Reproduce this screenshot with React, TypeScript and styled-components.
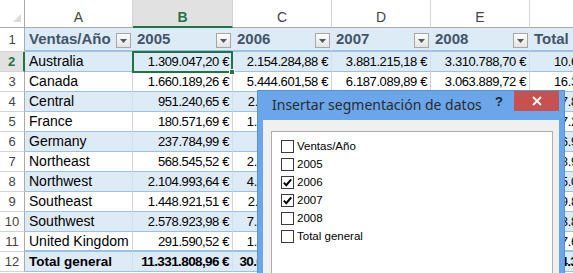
import styled, { createGlobalStyle } from 'styled-components';

const GlobalStyle = createGlobalStyle`
  html, body {
    margin: 0;
    padding: 0;
    background: #fff;
    overflow: hidden;
  }
`;

const Screen = styled.div`
  position: relative;
  width: 573px;
  height: 273px;
  overflow: hidden;
  background: #fff;
  font-family: "Liberation Sans", Arial, sans-serif;
`;

const Grid = styled.div`
  display: grid;
  grid-template-columns: 25px 108px 100px 99px 99px 99px 116px;
  grid-template-rows: 28px 24px repeat(11, 20px);
  width: 646px;
`;

const Corner = styled.div`
  box-sizing: border-box;
  display: flex;
  align-items: flex-end;
  justify-content: flex-end;
  padding: 0 3px 5px 0;
  border-right: 1px solid #ababab;
  border-bottom: 1px solid #ababab;
`;

const ColHead = styled.div<{ $active?: boolean }>`
  box-sizing: border-box;
  padding-top: 7px;
  text-align: center;
  font-size: 14px;
  line-height: 20px;
  color: ${p => (p.$active ? '#217346' : '#444')};
  font-weight: ${p => (p.$active ? 700 : 400)};
  background: ${p => (p.$active ? '#e1e1e1' : '#fff')};
  border-right: 1px solid #d4d4d4;
  border-bottom: ${p => (p.$active ? '2px solid #217346' : '1px solid #ababab')};
`;

const RowHead = styled.div<{ $active?: boolean }>`
  box-sizing: border-box;
  display: flex;
  align-items: center;
  justify-content: center;
  font-size: 13px;
  color: ${p => (p.$active ? '#217346' : '#444')};
  font-weight: ${p => (p.$active ? 700 : 400)};
  background: ${p => (p.$active ? '#e1e1e1' : '#fff')};
  border-right: ${p => (p.$active ? '2px solid #217346' : '1px solid #ababab')};
  border-bottom: 1px solid #d4d4d4;
`;

const HeadCell = styled.div`
  box-sizing: border-box;
  display: flex;
  align-items: center;
  justify-content: space-between;
  padding: 0 1px 0 4px;
  background: #ddebf7;
  border-right: 1px solid #ddebf7;
  border-bottom: 2px solid #9bc2e6;
  font-size: 15px;
  font-weight: 700;
  line-height: 22px;
  color: #44546a;
  white-space: nowrap;
`;

const Drop = styled.span`
  align-self: flex-end;
  margin-bottom: 2px;
  width: 15px;
  height: 15px;
  box-sizing: border-box;
  border: 1px solid #a6a6a6;
  background: linear-gradient(#fdfdfd, #e4e4e4);
  display: flex;
  align-items: center;
  justify-content: center;
  flex-shrink: 0;
`;

const Accent = styled.span`
  color: #e8912d;
  margin-left: 5px;
`;

const Cell = styled.div<{ $fill: boolean; $num?: boolean; $bold?: boolean; $thick?: boolean }>`
  position: relative;
  box-sizing: border-box;
  padding: 0 ${p => (p.$num ? '3px' : '4px')};
  background: ${p => (p.$fill ? '#ddebf7' : '#fff')};
  border-right: 1px solid ${p => (p.$fill ? '#cfe0f1' : '#d4d4d4')};
  border-bottom: ${p => (p.$thick ? 2 : 1)}px solid #9bc2e6;
  text-align: ${p => (p.$num ? 'right' : 'left')};
  font-size: ${p => (p.$bold ? '13.5px' : p.$num ? '13px' : '14px')};
  letter-spacing: ${p => (p.$num ? (p.$bold ? '-0.6px' : '-0.4px') : '0')};
  font-weight: ${p => (p.$bold ? 700 : 400)};
  line-height: 19px;
  white-space: nowrap;
  color: #000;
`;

const Selection = styled.div`
  position: absolute;
  left: -1px;
  top: -1px;
  width: 101px;
  height: 22px;
  box-sizing: border-box;
  border: 2px solid #217346;
  z-index: 2;
  pointer-events: none;
`;

const Handle = styled.span`
  position: absolute;
  right: -4px;
  bottom: -4px;
  width: 6px;
  height: 6px;
  box-sizing: border-box;
  background: #217346;
  border: 1px solid #fff;
`;

const Dialog = styled.div`
  position: absolute;
  left: 257px;
  top: 90px;
  width: 308px;
  height: 200px;
  box-sizing: border-box;
  border: 1px solid #5592dc;
  background: #6ba6eb;
  display: flex;
  flex-direction: column;
  padding: 0 5px;
  z-index: 5;
`;

const TitleBar = styled.div`
  height: 29px;
  display: flex;
  align-items: flex-start;
  flex-shrink: 0;
`;

const Title = styled.span`
  margin-right: auto;
  padding-left: 9px;
  font-family: "Noto Sans", "Open Sans", sans-serif;
  font-size: 14px;
  line-height: 27px;
  color: #2b2b2b;
  white-space: nowrap;
`;

const Help = styled.span`
  margin-right: 11px;
  font-family: "Liberation Sans", Arial, sans-serif;
  font-size: 13px;
  font-weight: 700;
  line-height: 22px;
  color: #1f1f1f;
`;

const Close = styled.span`
  width: 45px;
  height: 20px;
  background: #c75050;
  display: flex;
  align-items: center;
  justify-content: center;
`;

const Body = styled.div`
  flex: 1;
  background: #f0f0f0;
  padding: 11px 6px 0 8px;
  display: flex;
`;

const ListBox = styled.div`
  flex: 1;
  background: #fff;
  border: 1px solid #abadb3;
  padding: 5px 0 0 9px;
  display: flex;
  flex-direction: column;
`;

const Item = styled.div`
  height: 18px;
  display: flex;
  align-items: center;
  font-family: "Liberation Sans", Arial, sans-serif;
  font-size: 11.5px;
  color: #000;
`;

const Box = styled.span`
  width: 13px;
  height: 13px;
  margin-right: 3px;
  box-sizing: border-box;
  border: 1px solid #3a3a3a;
  background: #fff;
  display: flex;
  align-items: center;
  justify-content: center;
  flex-shrink: 0;
`;

const rows = [
  { name: 'Australia', v: ['1.309.047,20 €', '2.154.284,88 €', '3.881.215,18 €', '3.310.788,70 €', '10.655.335,96 €'] },
  { name: 'Canada', v: ['1.660.189,26 €', '5.444.601,58 €', '6.187.089,89 €', '3.063.889,72 €', '16.355.770,45 €'] },
  { name: 'Central', v: ['951.240,65 €', '2.011.452,37 €', '2.476.918,04 €', '2.455.312,83 €', '7.894.923,89 €'] },
  { name: 'France', v: ['180.571,69 €', '1.325.894,12 €', '3.105.227,61 €', '2.624.511,07 €', '7.236.204,49 €'] },
  { name: 'Germany', v: ['237.784,99 €', '512.336,40 €', '2.988.104,55 €', '3.163.740,98 €', '6.901.966,92 €'] },
  { name: 'Northeast', v: ['568.545,52 €', '2.437.901,85 €', '3.275.646,30 €', '2.667.825,19 €', '8.949.918,86 €'] },
  { name: 'Northwest', v: ['2.104.993,64 €', '4.318.572,06 €', '5.402.216,77 €', '3.220.037,48 €', '15.045.819,95 €'] },
  { name: 'Southeast', v: ['1.448.921,51 €', '2.846.118,73 €', '2.791.564,12 €', '2.731.303,80 €', '9.817.908,16 €'] },
  { name: 'Southwest', v: ['2.578.923,98 €', '7.557.390,29 €', '8.613.012,45 €', '5.052.374,91 €', '23.801.701,63 €'] },
  { name: 'United Kingdom', v: ['291.590,52 €', '1.408.225,47 €', '3.317.472,61 €', '2.661.398,22 €', '7.678.686,82 €'] },
];

const total = ['11.331.808,96 €', '30.016.777,75 €', '42.038.468,43 €', '30.951.191,00 €', '114.338.236,14 €'];

const years = ['2005', '2006', '2007', '2008'];
const fields = [
  { label: 'Ventas/Año', checked: false },
  { label: '2005', checked: false },
  { label: '2006', checked: true },
  { label: '2007', checked: true },
  { label: '2008', checked: false },
  { label: 'Total general', checked: false },
];

function Arrow() {
  return (
    <svg width="7" height="4" viewBox="0 0 7 4">
      <path d="M0 0 H7 L3.5 4 Z" fill="#575757" />
    </svg>
  );
}

function Check() {
  return (
    <svg width="11" height="11" viewBox="0 0 11 11">
      <path d="M1.8 5.6 L4.3 8.2 L9.2 2.4" fill="none" stroke="#000" strokeWidth="2" />
    </svg>
  );
}

export default function App() {
  return (
    <>
      <GlobalStyle />
      <Screen>
        <Grid>
          <Corner>
            <svg width="8" height="8" viewBox="0 0 8 8">
              <path d="M8 0 V8 H0 Z" fill="#dadada" />
            </svg>
          </Corner>
          {['A', 'B', 'C', 'D', 'E', 'F'].map(c => (
            <ColHead key={c} $active={c === 'B'}>{c}</ColHead>
          ))}

          <RowHead>1</RowHead>
          <HeadCell>Ventas/Año<Drop><Arrow /></Drop></HeadCell>
          {years.map(y => (
            <HeadCell key={y}>{y}<Drop><Arrow /></Drop></HeadCell>
          ))}
          <HeadCell>
            <span>Total<Accent>⁞</Accent></span>
          </HeadCell>

          {rows.map((r, i) => {
            const fill = i % 2 === 0;
            return [
              <RowHead key={r.name + 'h'} $active={i === 0}>{i + 2}</RowHead>,
              <Cell key={r.name} $fill={fill} $thick={i === rows.length - 1}>{r.name}</Cell>,
              ...r.v.map((v, j) => (
                <Cell key={r.name + j} $fill={fill} $num $thick={i === rows.length - 1}>
                  {v}
                  {i === 0 && j === 0 && (
                    <Selection>
                      <Handle />
                    </Selection>
                  )}
                </Cell>
              )),
            ];
          })}

          <RowHead>12</RowHead>
          <Cell $fill $bold>Total general</Cell>
          {total.map(v => (
            <Cell key={v} $fill $num $bold>{v}</Cell>
          ))}
        </Grid>

        <Dialog>
          <TitleBar>
            <Title>Insertar segmentación de datos</Title>
            <Help>?</Help>
            <Close>
              <svg width="10" height="10" viewBox="0 0 10 10">
                <path d="M1 1 L9 9 M9 1 L1 9" stroke="#fff" strokeWidth="1.8" />
              </svg>
            </Close>
          </TitleBar>
          <Body>
            <ListBox>
              {fields.map(f => (
                <Item key={f.label}>
                  <Box>{f.checked && <Check />}</Box>
                  {f.label}
                </Item>
              ))}
            </ListBox>
          </Body>
        </Dialog>
      </Screen>
    </>
  );
}
